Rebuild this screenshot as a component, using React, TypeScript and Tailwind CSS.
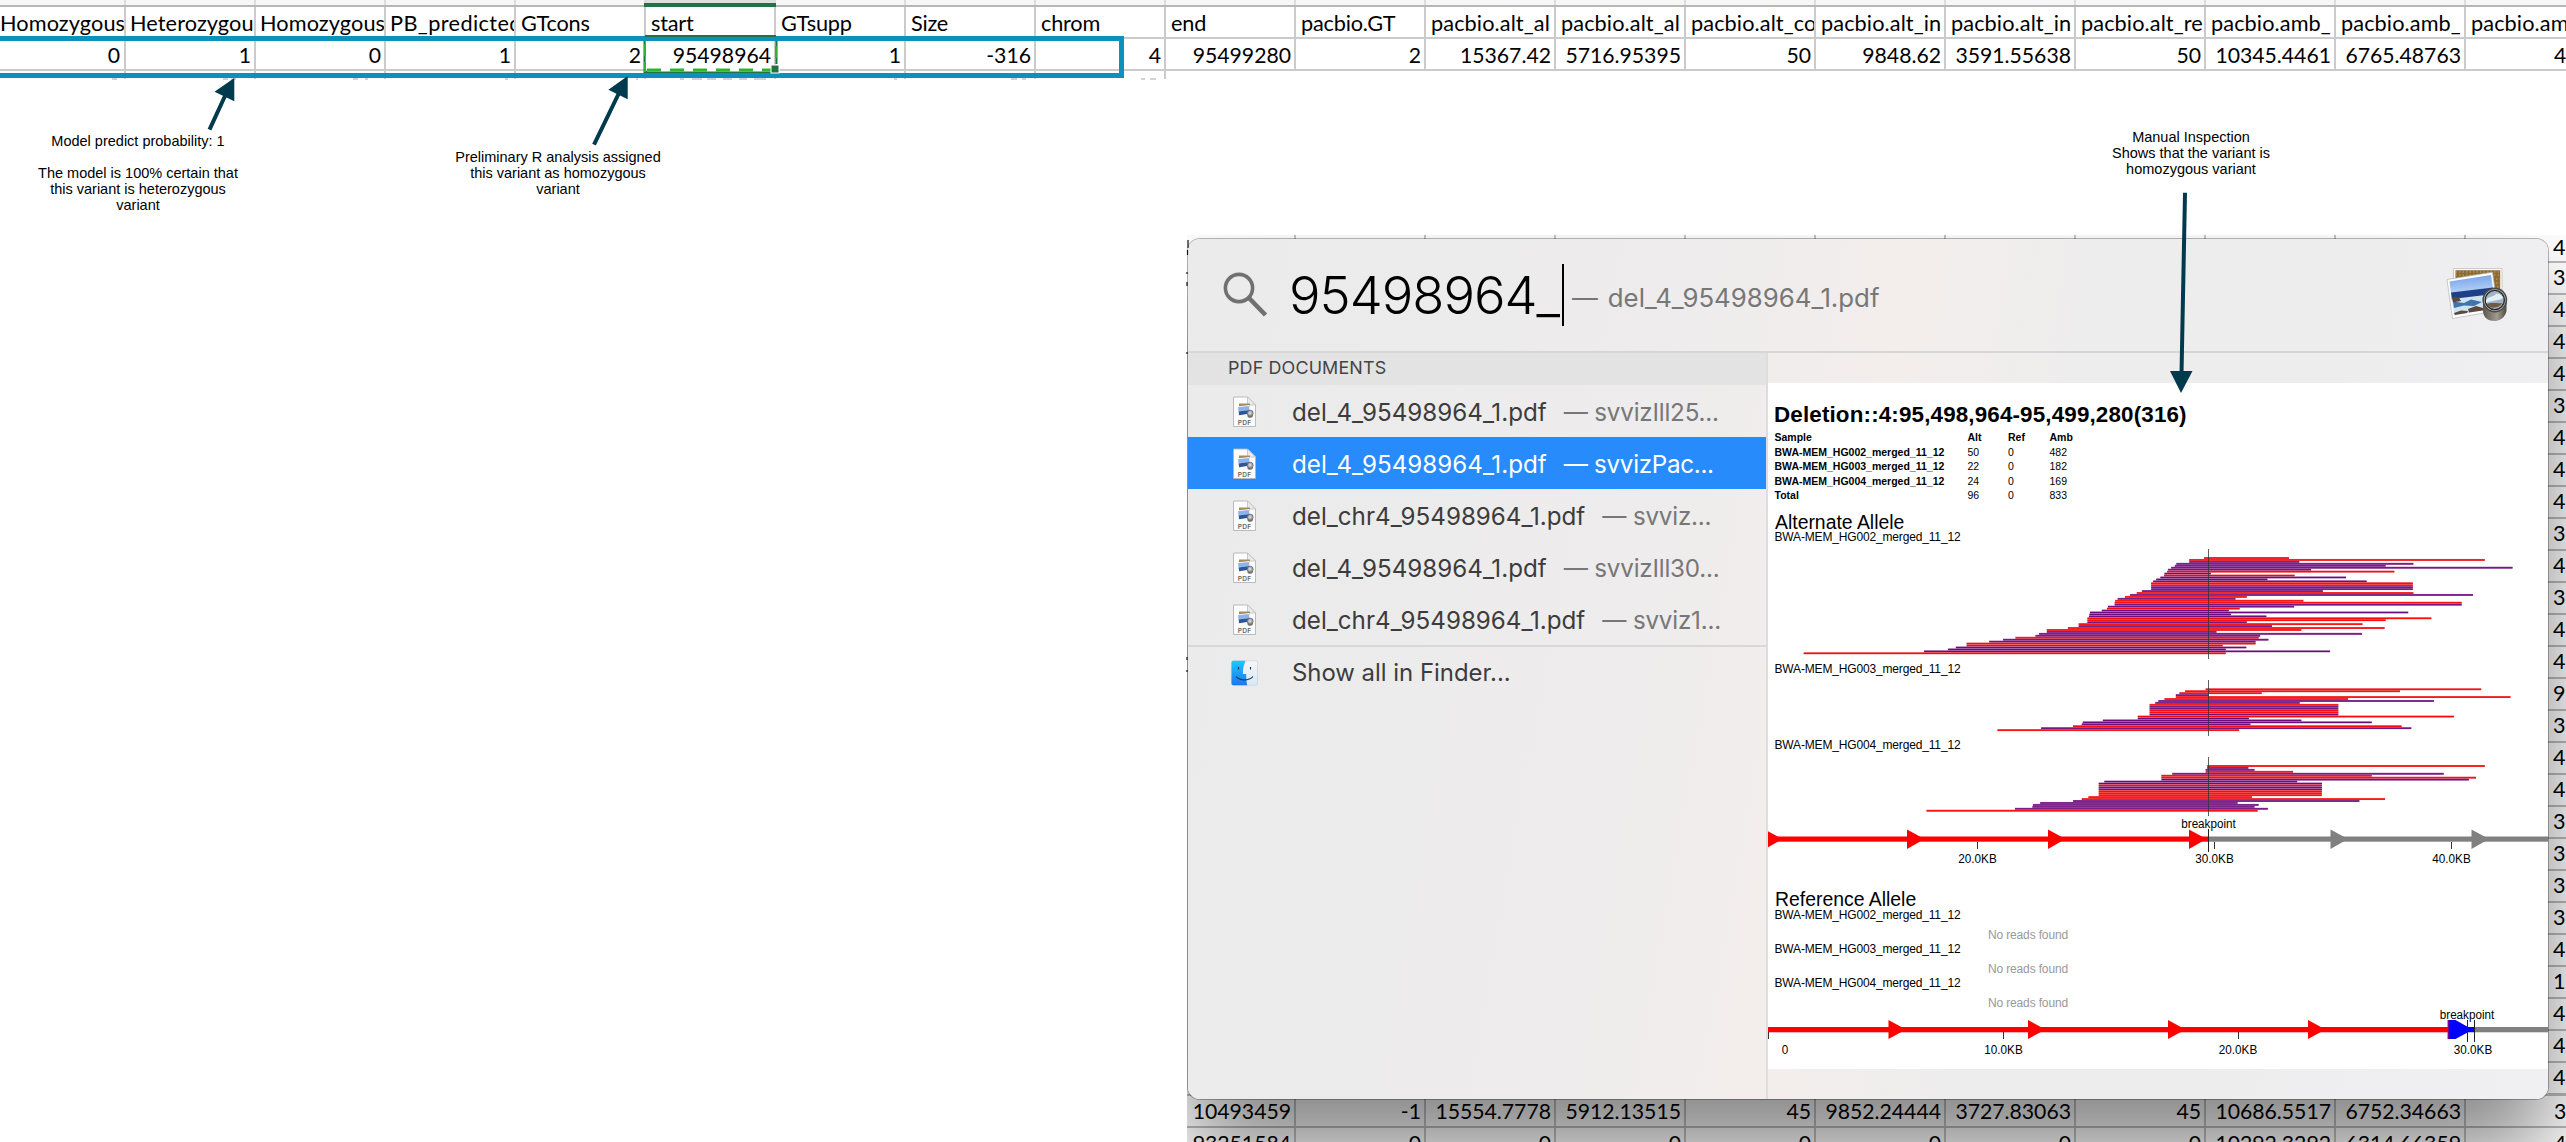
import React from "react";

const headers: [string, string][] = [
  ["Homozygous", "0"],
  ["Heterozygou", "1"],
  ["Homozygous", "0"],
  ["PB_predicted", "1"],
  ["GTcons", "2"],
  ["start", "95498964"],
  ["GTsupp", "1"],
  ["Size", "-316"],
  ["chrom", "4"],
  ["end", "95499280"],
  ["pacbio.GT", "2"],
  ["pacbio.alt_al", "15367.42"],
  ["pacbio.alt_al", "5716.95395"],
  ["pacbio.alt_co", "50"],
  ["pacbio.alt_in", "9848.62"],
  ["pacbio.alt_in", "3591.55638"],
  ["pacbio.alt_re", "50"],
  ["pacbio.amb_", "10345.4461"],
  ["pacbio.amb_", "6765.48763"],
  ["pacbio.am", "4"],
];

const lowerRows: string[][] = [
  ["10493459", "-1", "15554.7778", "5912.13515", "45", "9852.24444", "3727.83063", "45", "10686.5517", "6752.34663"],
  ["93251584", "0", "0", "0", "0", "0", "0", "0", "10292.3292", "6314.66359"],
];

const edgeDigits = "434443444343449344333341444";

type Bar = [number, number, "R" | "P"];

const hg002: Bar[] = [
  [864, 1029, "R"], [835, 1410, "R"], [835, 1049, "P"], [810, 1271, "P"], [807, 1217, "P"],
  [800, 1464, "P"], [794, 1072, "P"], [792, 1234, "R"], [787, 877, "P"], [786, 1040, "R"],
  [779, 1140, "P"], [771, 987, "P"], [765, 1180, "P"], [761, 1270, "R"], [761, 1270, "R"],
  [761, 1270, "P"], [761, 1270, "P"], [743, 1095, "P"], [733, 1271, "R"], [720, 1387, "P"],
  [710, 947, "R"], [696, 925, "P"], [691, 1057, "R"], [690, 1365, "R"], [690, 1365, "P"],
  [677, 1039, "P"], [675, 933, "R"], [665, 912, "P"], [642, 1261, "P"], [641, 916, "P"],
  [640, 985, "P"], [637, 1306, "R"], [637, 1217, "R"], [637, 947, "P"], [620, 1172, "R"],
  [620, 996, "P"], [599, 1215, "R"], [558, 1053, "R"], [558, 888, "P"], [543, 1171, "P"],
  [536, 973, "P"], [497, 970, "R"], [473, 989, "P"], [446, 964, "P"], [402, 964, "R"],
  [402, 900, "R"], [381, 946, "P"], [366, 906, "P"], [319, 1109, "P"], [85, 906, "R"],
];

const hg003: Bar[] = [
  [867, 1403, "R"], [827, 1245, "R"], [816, 976, "R"], [809, 873, "P"], [809, 1460, "R"],
  [787, 1144, "R"], [775, 1311, "P"], [769, 1050, "P"], [758, 1125, "R"], [758, 1125, "P"],
  [758, 1125, "P"], [758, 1125, "R"], [758, 1125, "R"], [758, 1125, "P"], [735, 1350, "R"],
  [735, 951, "P"], [667, 1053, "P"], [628, 1190, "P"], [626, 954, "P"], [609, 1248, "R"],
  [547, 1267, "P"], [462, 932, "R"],
];

const hg004: Bar[] = [
  [870, 1410, "R"], [870, 950, "P"], [867, 962, "P"], [867, 1037, "R"], [802, 1330, "P"],
  [781, 1190, "R"], [781, 1393, "R"], [781, 1379, "P"], [670, 1045, "P"], [659, 1093, "P"],
  [659, 1093, "R"], [659, 1093, "P"], [659, 1093, "P"], [659, 1093, "R"], [659, 1093, "R"],
  [659, 1093, "R"], [639, 957, "R"], [626, 1216, "R"], [609, 1166, "P"], [545, 929, "P"],
  [531, 970, "P"], [530, 962, "P"], [496, 988, "P"], [324, 968, "R"],
];

/* Read positions are in chart units; one unit is 1/1.9454 px, origin 8px left of the page. */
const sx = (u: number) => u / 1.9454 - 8;

function Track({ bars, height, first }: { bars: Bar[]; height: number; first: number }) {
  return (
    <svg className="block" width="780" height={height}>
      {bars.map(([a, b, c], i) => {
        const y = first + i * 1.945;
        return (
          <g key={i}>
            <rect x={sx(a)} y={y - 1} width={sx(b) - sx(a)} height="1.95" fill={c === "R" ? "#ee2a2c" : "#87308f"} opacity="0.85" />
            <rect x={sx(a)} y={y - 0.5} width={sx(b) - sx(a)} height="1.1" fill={c === "R" ? "#fa0505" : "#6d0a7e"} />
          </g>
        );
      })}
      <path d={`M440.5 0V${height}`} stroke="#333" strokeWidth="0.8" />
    </svg>
  );
}

function AxisText({ x, y, w, children }: { x: number; y: number; w: number; children: string }) {
  return (
    <text x={x} y={y} textAnchor="middle" textLength={w} lengthAdjust="spacingAndGlyphs" fontSize="12" fill="#000">
      {children}
    </text>
  );
}

function AltAxis() {
  return (
    <svg className="block" width="780" height="60">
      <rect x="0" y="20.5" width="440" height="5.2" fill="#f00" />
      <rect x="440" y="20.5" width="340" height="5.2" fill="#808080" />
      {[-3, 139, 280, 421].map((x) => (
        <path key={x} d={`M${x} 13.5 L${x + 17.5} 23 L${x} 33 Z`} fill="#f00" />
      ))}
      {[562.5, 703.5].map((x) => (
        <path key={x} d={`M${x} 13.5 L${x + 17.5} 23 L${x} 33 Z`} fill="#808080" />
      ))}
      <path d="M440.5 13V36" stroke="#222" />
      <path d="M209.5 26V33M446.5 26V33M683.5 26V33" stroke="#333" />
      <AxisText x={440.5} y={12.3} w={54.5}>breakpoint</AxisText>
      <AxisText x={209.5} y={47} w={38.5}>20.0KB</AxisText>
      <AxisText x={446.5} y={47} w={38.5}>30.0KB</AxisText>
      <AxisText x={683.5} y={47} w={38.5}>40.0KB</AxisText>
    </svg>
  );
}

function RefAxis() {
  return (
    <svg className="block" width="780" height="60">
      <rect x="0" y="19" width="680" height="5.3" fill="#f00" />
      <rect x="706" y="19" width="74" height="5.3" fill="#808080" />
      {[120.5, 260, 400, 540].map((x) => (
        <path key={x} d={`M${x} 12 L${x + 17.5} 21.5 L${x} 31 Z`} fill="#f00" />
      ))}
      <path d="M680 12H687.5L700 19H706.5V24.3H700L687.5 31H680Z" fill="#00f" />
      <path d="M680 12V31" stroke="#f02" />
      <path d="M699.5 12V34M706.5 12V34" stroke="#222" />
      <path d="M0.5 24V31M235.5 24V31M470.5 24V31" stroke="#333" />
      <AxisText x={699} y={10.7} w={54.5}>breakpoint</AxisText>
      <AxisText x={17} y={46} w={6.5}>0</AxisText>
      <AxisText x={235.5} y={46} w={38.5}>10.0KB</AxisText>
      <AxisText x={470} y={46} w={38.5}>20.0KB</AxisText>
      <AxisText x={705} y={46} w={38.5}>30.0KB</AxisText>
    </svg>
  );
}

function PdfIcon() {
  return (
    <svg width="25" height="32" viewBox="0 0 25 32" className="block">
      <path d="M1.5 1H15.5L23.5 9V30.5H1.5Z" fill="#fdfdfd" stroke="#b4b4b4" strokeWidth="0.9" />
      <path d="M15.5 1V9H23.5Z" fill="#ececec" stroke="#bcbcbc" strokeWidth="0.8" />
      <path d="M7 7.5H18V18H7Z" fill="#a88a5c" />
      <path d="M5 10.5L17.5 9L19 18.5L6.5 20.5Z" fill="#f6f8fb" />
      <path d="M6 11.3L16.8 10L17.5 14L6.6 15.6Z" fill="#8ab4ee" />
      <path d="M6.6 15.5L17.5 14L18 17.5L7.2 19.3Z" fill="#2f5493" />
      <path d="M15.5 18V20.5C16 22.3 20.5 22.3 21 20V17.5Z" fill="#77736b" />
      <circle cx="18.2" cy="17.2" r="3" fill="#a3a6a8" stroke="#66686b" strokeWidth="0.8" />
      <circle cx="18" cy="17" r="1.5" fill="#ccd2d7" />
      <text x="12.5" y="28.6" textAnchor="middle" fontSize="6.6" fontWeight="600" fill="#666" textLength="13.5">PDF</text>
    </svg>
  );
}

function FinderIcon() {
  return (
    <svg width="27" height="26" viewBox="0 0 27 26" className="block">
      <defs>
        <linearGradient id="fb" x1="0" y1="0" x2="0" y2="1">
          <stop offset="0" stopColor="#1cc8fb" />
          <stop offset="1" stopColor="#1f76ee" />
        </linearGradient>
        <linearGradient id="fw" x1="0" y1="0" x2="0" y2="1">
          <stop offset="0" stopColor="#f6f6f8" />
          <stop offset="1" stopColor="#d8e8f6" />
        </linearGradient>
      </defs>
      <rect x="0.5" y="0.8" width="26" height="24.4" rx="1.8" fill="url(#fw)" stroke="#c2ccd6" strokeWidth="0.6" />
      <path d="M2.3 0.8H14.6C12.6 5 11.8 9.5 11.9 14H15.2C15.1 18 15.4 21.6 16.2 25.2H2.3A1.8 1.8 0 0 1 0.5 23.4V2.6A1.8 1.8 0 0 1 2.3 0.8Z" fill="url(#fb)" />
      <path d="M7.5 7V9.6M19.5 7V9.6M5 16.6C9.5 21 17.5 21 22 16.6" fill="none" stroke="#16324f" strokeWidth="1.1" />
    </svg>
  );
}

function PreviewIcon() {
  return (
    <svg width="62" height="56" viewBox="0 0 62 56" className="block">
      <defs>
        <linearGradient id="sky" x1="0" y1="0" x2="0.2" y2="1">
          <stop offset="0" stopColor="#6f9ce8" />
          <stop offset="1" stopColor="#b6d4f8" />
        </linearGradient>
        <linearGradient id="lens" x1="0" y1="0" x2="1" y2="0">
          <stop offset="0" stopColor="#5b564f" />
          <stop offset="0.6" stopColor="#a19a8f" />
          <stop offset="1" stopColor="#4d4943" />
        </linearGradient>
      </defs>
      <path d="M7.5 1.5H56V42H7.5Z" fill="#fcfcfa" stroke="#b9b9b4" strokeWidth="0.7" />
      <path d="M9.5 3.2H54.2V40H9.5Z" fill="#8b6a35" />
      <path d="M9.5 5H54M9.5 8H54M50 12H54M50 16H54M51 20H54" stroke="#c9a565" strokeWidth="1" strokeDasharray="1.5 2" />
      <path d="M1 12.5L46.5 5.2L52 43.5L6.5 51.5Z" fill="#fff" stroke="#b5b5b5" strokeWidth="0.7" />
      <path d="M3.5 14.5L45 8L47 21L5 26.5Z" fill="url(#sky)" />
      <path d="M5 25.5L47 20.5L48 29L6 34Z" fill="#1f3f86" />
      <path d="M6 32L48 27L49 41L8 48.5Z" fill="#cfe4f0" />
      <path d="M7 34.5L18 36L25 32.5L36 35L28 39L18 38.5L8 41Z" fill="#3f74ac" />
      <path d="M6 30L13 30.5L15 34L7 35.5ZM8 46L15 43.5L22 44L21 46L9 48ZM22 42L30 39L37 41L37 43.5L23 45.5Z" fill="#5b4a3c" />
      <path d="M37 33V45C38 51 42 54 49 54C55 53.5 59 50 60.5 44V32Z" fill="url(#lens)" />
      <circle cx="48.8" cy="33" r="11.6" fill="#c4c4c2" stroke="#4a4a48" strokeWidth="1.6" />
      <circle cx="48.8" cy="33" r="9.6" fill="#9fb4c6" stroke="#2b2b2b" strokeWidth="1.4" />
      <path d="M40 33C43 29 47 30 50 27C53 26 56 28 57 31C53 34 46 33 40 36Z" fill="#e4eef5" />
      <path d="M41 37C45 35 52 37 56 36C54 41 44 43 41 37Z" fill="#6f5a42" />
    </svg>
  );
}

const results: [string, string, boolean][] = [
  ["del_4_95498964_1.pdf", "svvizIll25...", false],
  ["del_4_95498964_1.pdf", "svvizPac...", true],
  ["del_chr4_95498964_1.pdf", "svviz...", false],
  ["del_4_95498964_1.pdf", "svvizIll30...", false],
  ["del_chr4_95498964_1.pdf", "svviz1...", false],
];

const sampleRows: [string, string, string, string][] = [
  ["BWA-MEM_HG002_merged_11_12", "50", "0", "482"],
  ["BWA-MEM_HG003_merged_11_12", "22", "0", "182"],
  ["BWA-MEM_HG004_merged_11_12", "24", "0", "169"],
  ["Total", "96", "0", "833"],
];

function Label({ children }: { children: string }) {
  return <div className="h-[14px] whitespace-nowrap pl-[6.5px] text-[12px] leading-[14px] tracking-[-0.16px]">{children}</div>;
}

function PreviewPage() {
  return (
    <div className="h-[686px] w-[780px] overflow-hidden bg-white font-['Liberation_Sans',sans-serif] text-black">
      <h1 className="mt-[19px] h-[28px] whitespace-nowrap pl-[6px] text-[22.4px] font-bold leading-[25px] tracking-[0.15px]">
        Deletion::4:95,498,964-95,499,280(316)
      </h1>
      <div className="grid grid-cols-[193px_40.5px_41.5px_60px] pl-[6.5px] text-[10.5px] leading-[14.6px]">
        {["Sample", "Alt", "Ref", "Amb"].map((h) => (
          <b key={h}>{h}</b>
        ))}
        {sampleRows.map((r) => (
          <React.Fragment key={r[0]}>
            <b>{r[0]}</b>
            <span>{r[1]}</span>
            <span>{r[2]}</span>
            <span>{r[3]}</span>
          </React.Fragment>
        ))}
      </div>
      <div className="mt-[8px] h-[20px] pl-[7px] text-[19.4px] leading-[22px]">Alternate Allele</div>
      <div className="mt-[-1px]"><Label>BWA-MEM_HG002_merged_11_12</Label></div>
      <div className="mt-[5px]"><Track bars={hg002} height={110} first={9} /></div>
      <div className="mt-[3px]"><Label>BWA-MEM_HG003_merged_11_12</Label></div>
      <div className="mt-[4px]"><Track bars={hg003} height={56} first={9.3} /></div>
      <div className="mt-[2px]"><Label>BWA-MEM_HG004_merged_11_12</Label></div>
      <div className="mt-[5px]"><Track bars={hg004} height={59} first={9} /></div>
      <AltAxis />
      <div className="mt-[13px] h-[19px] pl-[7px] text-[19.4px] leading-[20px]">Reference Allele</div>
      {["BWA-MEM_HG002_merged_11_12", "BWA-MEM_HG003_merged_11_12", "BWA-MEM_HG004_merged_11_12"].map((l) => (
        <div key={l} className="h-[34px]">
          <Label>{l}</Label>
          <div className="mt-[6px] pl-[220px] text-[12px] leading-[14px] tracking-[-0.15px] text-[#999]">No reads found</div>
        </div>
      ))}
      <div className="mt-[-2px]">
        <RefAxis />
      </div>
    </div>
  );
}

function SpotlightWindow() {
  return (
    <div className="absolute left-[1px] top-[4px] h-[860px] w-[1360px] rounded-[12px] shadow-[0_0_0_1px_rgba(0,0,0,0.28),0_54px_90px_rgba(0,0,0,0.48)]">
      <div className="flex h-full w-full flex-col overflow-hidden rounded-[12px] bg-[linear-gradient(100deg,#ebebeb_0%,#eeecec_35%,#f3eeec_48%,#eeeded_60%,#ededee_75%,#f0f0f2_100%)] font-['Inter',sans-serif]">
        <div className="flex h-[114px] items-center border-b-2 border-[#d6d6d7] pl-[35px] pr-[40px]">
          <svg width="46" height="46" viewBox="0 0 46 46" className="block">
            <circle cx="16" cy="16" r="13.6" fill="none" stroke="#707070" strokeWidth="3.6" />
            <path d="M25.5 25.5L42.5 43" stroke="#707070" strokeWidth="4.6" />
          </svg>
          <div className="ml-[20px] flex h-[62px] items-center border-r-2 border-black text-[52.5px] font-light leading-[62px] tracking-[-1px] text-black">
            <span className="w-[273px] whitespace-nowrap">95498964_</span>
          </div>
          <div className="ml-[8px] mt-[7px] flex-1 whitespace-nowrap text-[25.8px] text-[#777]">
            <span className="mr-[10px]">—</span>
            <span>del_4_95498964_1.pdf</span>
          </div>
          <PreviewIcon />
        </div>
        <div className="flex flex-1">
          <div className="flex w-[580px] flex-col border-r-2 border-[#dedddd]">
            <div className="flex h-[32px] items-center bg-[#e3e3e3] pb-[1px] pl-[40px] text-[17.9px] tracking-[0.15px] text-[#444]">PDF DOCUMENTS</div>
            {results.map(([name, path, sel], i) => (
              <div key={i} className={sel ? "flex h-[52px] items-center whitespace-nowrap bg-[#278bfc] pl-[44px] pt-[1px] text-[24.2px] text-white" : "flex h-[52px] items-center whitespace-nowrap pl-[44px] pt-[1px] text-[24.2px] text-[#3c3c3c]"}>
                <PdfIcon />
                <span className="ml-[35px] pt-[3px]">{name}</span>
                <span className={sel ? "ml-[17px] pt-[3px] tracking-[-0.3px]" : "ml-[17px] pt-[3px] tracking-[-0.2px] text-[#777]"}>— {path}</span>
              </div>
            ))}
            <div className="flex h-[54px] items-center border-t-2 border-[#d8d8d8] pl-[43px] text-[23.9px] text-[#3c3c3c]">
              <FinderIcon />
              <span className="ml-[34px]">Show all in Finder...</span>
            </div>
          </div>
          <div className="pt-[30px]">
            <PreviewPage />
          </div>
        </div>
      </div>
    </div>
  );
}

function LowerSheet() {
  return (
    <div className="relative ml-[1187px] h-[907px] w-[1379px] overflow-hidden bg-white">
      <div className="flex h-[859px] justify-between">
        <div className="flex">
          {Array.from({ length: 10 }, (_, i) => (
            <div key={i} className={i === 0 ? "h-full w-[109px] border-r-2 border-[#c4c4c4]" : "h-full w-[130px] border-r-2 border-[#c4c4c4]"} />
          ))}
        </div>
        <div className="w-[18px]">
          {edgeDigits.split("").map((d, i) => (
            <div key={i} className={i === 0 ? "h-[28px] border-b-2 border-[#bcbcbc] pl-[5px] text-[21.5px] leading-[24px]" : "h-[32.03px] border-b-2 border-[#bcbcbc] pl-[5px] text-[21.5px] leading-[29px]"}>{d}</div>
          ))}
        </div>
      </div>
      {lowerRows.map((row, r) => (
        <div key={r} className="flex h-[32px] border-t-2 border-[#bcbcbc] text-[21.2px] leading-[30px]">
          {row.map((v, c) => (
            <div key={c} className={c === 0 ? "w-[109px] shrink-0 border-r-2 border-[#c4c4c4] pr-[3px] text-right" : "w-[130px] shrink-0 border-r-2 border-[#c4c4c4] pr-[3px] text-right"}>{v}</div>
          ))}
          <div className="shrink-0 pl-[88px]">{r === 0 ? "3" : "4"}</div>
        </div>
      ))}
      <SpotlightWindow />
    </div>
  );
}

function Note({ className, lines }: { className: string; lines: string[] }) {
  return (
    <div className={className}>
      {lines.map((l, i) => (
        <div key={i} className="h-4">{l}</div>
      ))}
    </div>
  );
}

export default function App() {
  return (
    <div className="relative h-[1142px] w-[2566px] overflow-hidden bg-white font-['Lato','Open_Sans',sans-serif] text-black">
      <div className="h-[235px]">
        <div className="flex h-[7px] border-b-2 border-[#b6b6b6] bg-[#f6f6f6]">
          {headers.map((_, i) => (
            <div key={i} className={i === 0 ? "w-[126px] shrink-0 border-r-2 border-[#dcdcdc]" : i === 5 ? "w-[130px] shrink-0 border-r-2 border-[#dcdcdc] bg-[#dfdfdf]" : "w-[130px] shrink-0 border-r-2 border-[#dcdcdc]"} />
          ))}
        </div>
        <div className="flex h-[32px] border-b-2 border-[#cbcbcb] text-[21.7px] leading-[32px]">
          {headers.map(([h], i) => (
            <div key={i} className={i === 0 ? "w-[126px] shrink-0 overflow-hidden whitespace-nowrap border-r-2 border-[#cbcbcb] tracking-[0.1px]" : i < 3 ? "w-[130px] shrink-0 overflow-hidden whitespace-nowrap border-r-2 border-[#cbcbcb] pl-[4px] tracking-[0.1px]" : i === 3 ? "w-[130px] shrink-0 overflow-hidden whitespace-nowrap border-r-2 border-[#cbcbcb] pl-[4px] tracking-[0.4px]" : i < 11 ? "w-[130px] shrink-0 whitespace-nowrap border-r-2 border-[#cbcbcb] pl-[5px] tracking-[-0.2px]" : "w-[130px] shrink-0 overflow-hidden whitespace-nowrap border-r-2 border-[#cbcbcb] pl-[5px] tracking-[0.1px]"}>
              {h}
            </div>
          ))}
        </div>
        <div className="flex h-[32px] border-b-2 border-[#cbcbcb] text-[21.2px] leading-[32px]">
          {headers.map(([, v], i) => (
            <div key={i} className={i === 0 ? "w-[126px] shrink-0 border-r-2 border-[#cbcbcb] pr-[4px] text-right" : i === 19 ? "w-[130px] shrink-0 pl-[88px]" : "w-[130px] shrink-0 border-r-2 border-[#cbcbcb] pr-[3px] text-right"}>{v}</div>
          ))}
        </div>
        <div className="flex h-[8px]">
          {headers.slice(0, 9).map((_, i) => (
            <div key={i} className={i === 0 ? "w-[126px] border-r-2 border-[#cbcbcb]" : "w-[130px] border-r-2 border-[#cbcbcb]"} />
          ))}
        </div>
      </div>
      <LowerSheet />

      {/* row highlight */}
      <div className="absolute -left-2 top-[36px] h-[42px] w-[1132px] border-[5px] border-[#0a92bd]" />

      {/* active cell */}
      <div className="absolute left-[644px] top-[3px] h-[4px] w-[132px] bg-[#217346]" />
      <svg className="absolute left-[640px] top-[34px]" width="142" height="42">
        <path d="M5 2H136" stroke="#217346" strokeWidth="2" />
        <path d="M4.5 7V38H131M136.5 7V30" fill="none" stroke="#217346" strokeWidth="2" />
        <path d="M7 36H134" stroke="#fff" strokeWidth="3" />
        <path d="M7 36H134" stroke="#2db52d" strokeWidth="3" strokeDasharray="14 9" />
        <path d="M5 10V38M136 12V26" stroke="#2db52d" strokeWidth="2" strokeDasharray="12 6" />
        <rect x="131" y="31" width="8" height="8" fill="#217346" stroke="#fff" />
      </svg>

      {/* tops of the digits in the hidden rows */}
      <svg className="pointer-events-none absolute left-0 top-[78px]" width="1170" height="2">
        <path d="M112 1H117M223 1H228M231 1H236M353 1H358M365 1H368M505 1H508M636 1H638M680 1H684M692 1H702M707 1H716M723 1H732M739 1H747M754 1H766M894 1H897M1011 1H1017M1022 1H1026M1141 1H1145M1150 1H1156" stroke="#c4c4cc" strokeWidth="1.4" />
      </svg>
      <svg className="pointer-events-none absolute left-[1186px] top-[240px]" width="3" height="440">
        <path d="M2 0V8M1.5 10V15M1 32V34M1 42V46M1 112V114M1 417V420M1 430V432" stroke="#111" strokeWidth="1.2" />
      </svg>

      {/* annotations */}
      <Note className="absolute left-[18px] top-[133px] w-[240px] text-center font-['Liberation_Sans',sans-serif] text-[14.5px] leading-[17px]" lines={["Model predict probability: 1", "", "The model is 100% certain that", "this variant is heterozygous", "variant"]} />
      <Note className="absolute left-[428px] top-[149px] w-[260px] text-center font-['Liberation_Sans',sans-serif] text-[14.5px] leading-[17px]" lines={["Preliminary R analysis assigned", "this variant as homozygous", "variant"]} />
      <Note className="absolute left-[2071px] top-[129px] w-[240px] text-center font-['Liberation_Sans',sans-serif] text-[14.5px] leading-[17px]" lines={["Manual Inspection", "Shows that the variant is", "homozygous variant"]} />
      <svg className="pointer-events-none absolute left-0 top-0" width="2566" height="420">
        <g stroke="#003a4d" strokeWidth="4" fill="#003a4d">
          <path d="M209.5 129.7L225 96M594 144.7L619 93M2185 192.7L2181.5 374" fill="none" />
          <path stroke="none" d="M234.3 78L214.5 91.7L234.3 101.3ZM627.7 76L608.4 89.7L627.7 99.3ZM2181 393L2170 371H2192.5Z" />
        </g>
      </svg>
    </div>
  );
}
